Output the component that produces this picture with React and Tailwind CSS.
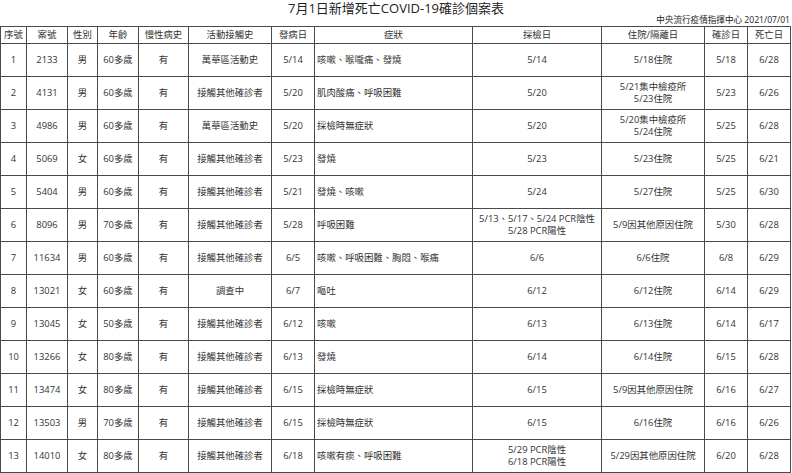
import React from "react";

const rows = [
  ["1", "2133", "男", "60多歲", "有", "萬華區活動史", "5/14", "咳嗽、喉嚨痛、發燒", "5/14", "5/18住院", "5/18", "6/28"],
  ["2", "4131", "男", "60多歲", "有", "接觸其他確診者", "5/20", "肌肉酸痛、呼吸困難", "5/20", "5/21集中檢疫所\n5/23住院", "5/23", "6/26"],
  ["3", "4986", "男", "60多歲", "有", "萬華區活動史", "5/20", "採檢時無症狀", "5/20", "5/20集中檢疫所\n5/24住院", "5/25", "6/28"],
  ["4", "5069", "女", "60多歲", "有", "接觸其他確診者", "5/23", "發燒", "5/23", "5/23住院", "5/25", "6/21"],
  ["5", "5404", "男", "60多歲", "有", "接觸其他確診者", "5/21", "發燒、咳嗽", "5/24", "5/27住院", "5/25", "6/30"],
  ["6", "8096", "男", "70多歲", "有", "接觸其他確診者", "5/28", "呼吸困難", "5/13、5/17、5/24 PCR陰性\n5/28 PCR陽性", "5/9因其他原因住院", "5/30", "6/28"],
  ["7", "11634", "男", "60多歲", "有", "接觸其他確診者", "6/5", "咳嗽、呼吸困難、胸悶、喉痛", "6/6", "6/6住院", "6/8", "6/29"],
  ["8", "13021", "女", "60多歲", "有", "調查中", "6/7", "嘔吐", "6/12", "6/12住院", "6/14", "6/29"],
  ["9", "13045", "女", "50多歲", "有", "接觸其他確診者", "6/12", "咳嗽", "6/13", "6/13住院", "6/14", "6/17"],
  ["10", "13266", "女", "80多歲", "有", "接觸其他確診者", "6/13", "發燒", "6/14", "6/14住院", "6/15", "6/28"],
  ["11", "13474", "女", "80多歲", "有", "接觸其他確診者", "6/15", "採檢時無症狀", "6/15", "5/9因其他原因住院", "6/16", "6/27"],
  ["12", "13503", "男", "70多歲", "有", "接觸其他確診者", "6/15", "採檢時無症狀", "6/15", "6/16住院", "6/16", "6/26"],
  ["13", "14010", "女", "80多歲", "有", "接觸其他確診者", "6/18", "咳嗽有痰、呼吸困難", "5/29 PCR陰性\n6/18 PCR陽性", "5/29因其他原因住院", "6/20", "6/28"],
];

const headers = ["序號", "案號", "性別", "年齡", "慢性病史", "活動接觸史", "發病日", "症狀", "採檢日", "住院/隔離日", "確診日", "死亡日"];

export default function App() {
  return (
    <div
      className="w-[792px] h-[473px] bg-white text-[#333] overflow-hidden"
      style={{ fontFamily: '"Open Sans", "Noto Sans CJK TC", sans-serif' }}
    >
      <div className="h-[14px] flex items-start justify-center text-[13px] leading-[14px] text-[#222] pt-px">
        7月1日新增死亡COVID-19確診個案表
      </div>
      <div className="h-[12px] flex items-center justify-end pr-[2px] text-[8.6px] leading-[12px] text-[#222]">
        中央流行疫情指揮中心 2021/07/01
      </div>
      <div className="w-[791px] grid grid-cols-[26px_41px_30px_41px_50px_83px_43px_158px_129px_103px_43px_43px] grid-rows-[17px_repeat(13,33px)] border-l border-t border-[#4a4a4a] text-[9.4px]">
        {headers.map((h, i) => (
          <div
            key={"h" + i}
            className="border-r border-b border-[#4a4a4a] flex items-center justify-center leading-none"
          >
            {h}
          </div>
        ))}
        {rows.map((r, ri) =>
          r.map((c, ci) => (
            <div
              key={ri + "-" + ci}
              className={
                "border-r border-b border-[#4a4a4a] flex flex-col justify-center leading-[12.5px] whitespace-pre " +
                (ci === 7 ? "items-start pl-[2px]" : "items-center text-center")
              }
            >
              {c.split("\n").map((line, li) => (
                <span key={li}>{line}</span>
              ))}
            </div>
          ))
        )}
      </div>
    </div>
  );
}
